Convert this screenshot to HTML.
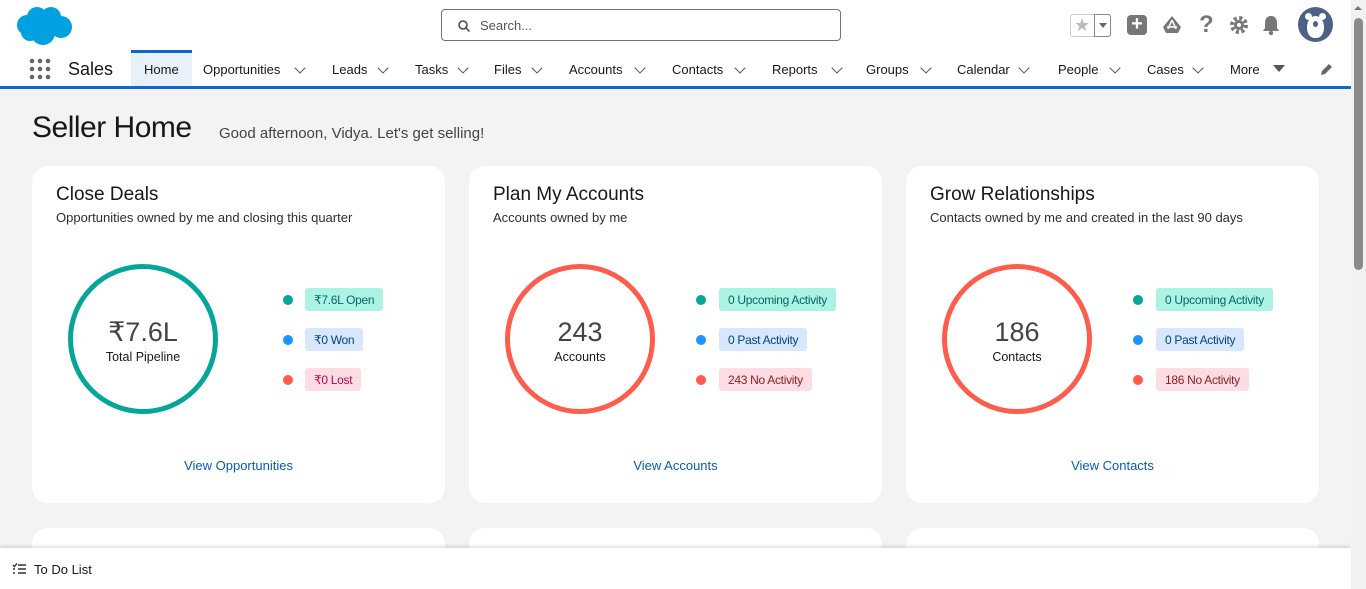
<!DOCTYPE html>
<html><head><meta charset="utf-8"><style>
*{box-sizing:border-box;margin:0;padding:0}
body{width:1366px;height:589px;overflow:hidden;background:#f3f3f3;font-family:"Liberation Sans",sans-serif;color:#181818;position:relative}
.top{position:absolute;left:0;top:0;width:1351px;height:50px;background:#fff}
.nav{position:absolute;left:0;top:50px;width:1351px;height:39px;background:#fff;border-bottom:3px solid #0b6bcb}
.search{position:absolute;left:441px;top:9px;width:400px;height:32px;border:1px solid #747474;border-radius:4px;font-size:13px;color:#555;padding:8px 0 0 38px}
.nav span{position:absolute;top:12px;font-size:13px;color:#181818}
.chev{position:absolute;top:14px;width:8px;height:8px;border-right:1.3px solid #555;border-bottom:1.3px solid #555;transform:rotate(45deg)}
.card{position:absolute;background:#fff;border-radius:16px;width:413px}
.card h2{position:absolute;left:24px;top:18px;font-size:19px;font-weight:normal}
.card p.s{position:absolute;left:24px;top:44px;font-size:13px;color:#2e2e2e}
.ring{position:absolute;left:36px;top:98px;width:150px;height:150px;border-radius:50%;border:5px solid;text-align:center}
.ring b{display:block;font-weight:300;font-size:27px;margin-top:48px;color:#444}
.ring i{font-style:normal;font-size:12.5px;display:block;margin-top:2px}
.dot{position:absolute;width:10px;height:10px;border-radius:50%}
.pill{position:absolute;height:23px;padding:5px 9px;font-size:12px;border-radius:3px;letter-spacing:-0.3px}
.link{position:absolute;width:100%;text-align:center;top:292px;font-size:13px;color:#0b5cab}
.bottom{position:absolute;left:0;top:548px;width:1351px;height:41px;background:#fff;box-shadow:0 -2px 3px rgba(0,0,0,.12)}
.sb{position:absolute;left:1351px;top:0;width:15px;height:589px;background:#f1f1f1}
.c1 .dot{left:251px}.c1 .pill{left:273px}
.c2 .dot{left:227px}.c2 .pill{left:250px}
</style></head><body>
<div class="top">
<svg style="position:absolute;left:15px;top:5px" width="60" height="40" viewBox="0 0 60 40"><g fill="#00a1e0"><circle cx="12" cy="20" r="10"/><circle cx="22" cy="12" r="10"/><circle cx="36" cy="12" r="10"/><circle cx="46" cy="22" r="11"/><circle cx="28" cy="28" r="12"/><circle cx="15" cy="27" r="9"/></g></svg>
<div class="search"><svg style="position:absolute;left:16px;top:10px" width="12" height="12" viewBox="0 0 12 12"><circle cx="5" cy="5" r="4" fill="none" stroke="#444" stroke-width="1.5"/><path d="M8 8l3.5 3.5" stroke="#444" stroke-width="1.5"/></svg>Search...</div>
<div style="position:absolute;left:1070px;top:14px;width:41px;height:23px;border:1px solid #ccc;border-radius:3px"><span style="position:absolute;left:3px;top:0;font-size:18px;color:#bbb">★</span><div style="position:absolute;left:23px;top:-1px;width:17px;height:23px;border:1px solid #888;border-radius:0 3px 3px 0"></div><div style="position:absolute;left:28px;top:8px;border:4px solid transparent;border-top:5px solid #666"></div></div>
<div style="position:absolute;left:1127px;top:15px;width:20px;height:20px;background:#777;border-radius:4px;color:#fff;font-size:20px;line-height:19px;text-align:center;font-weight:bold">+</div>
<svg style="position:absolute;left:1161px;top:15px" width="22" height="20" viewBox="0 0 22 20"><path d="M11 1L2 12 5 18H17L20 12Z" fill="#777"/><path d="M6 12h10M11 5l-4 9M11 5l4 9" stroke="#fff" stroke-width="1.5"/></svg>
<span style="position:absolute;left:1199px;top:11px;font-size:24px;color:#777;font-weight:bold">?</span>
<svg style="position:absolute;left:1229px;top:15px" width="20" height="20" viewBox="0 0 20 20"><circle cx="10" cy="10" r="7" fill="none" stroke="#777" stroke-width="4" stroke-dasharray="3 2.5"/><circle cx="10" cy="10" r="5" fill="#777"/><circle cx="10" cy="10" r="2" fill="#fff"/></svg>
<svg style="position:absolute;left:1261px;top:14px" width="20" height="22" viewBox="0 0 20 22"><path d="M10 2C6 2 4 5 4 9V14L2 17H18L16 14V9C16 5 14 2 10 2Z" fill="#777"/><circle cx="10" cy="19" r="2.2" fill="#777"/></svg>
<div style="position:absolute;left:1298px;top:7px;width:35px;height:35px;border-radius:50%;background:#4c6185;overflow:hidden"><div style="position:absolute;left:7px;top:6px;width:7px;height:7px;border-radius:50%;background:#fff"></div><div style="position:absolute;left:21px;top:6px;width:7px;height:7px;border-radius:50%;background:#fff"></div><div style="position:absolute;left:9px;top:9px;width:17px;height:22px;border-radius:50% 50% 45% 45%;background:#fff"></div><div style="position:absolute;left:15px;top:14px;width:5px;height:6px;border-radius:50%;background:#4c6185"></div></div>
</div>
<div class="nav">
<svg style="position:absolute;left:29px;top:8px" width="22" height="22"><g fill="#666"><circle cx="3" cy="3" r="2.3"/><circle cx="11" cy="3" r="2.3"/><circle cx="19" cy="3" r="2.3"/><circle cx="3" cy="11" r="2.3"/><circle cx="11" cy="11" r="2.3"/><circle cx="19" cy="11" r="2.3"/><circle cx="3" cy="19" r="2.3"/><circle cx="11" cy="19" r="2.3"/><circle cx="19" cy="19" r="2.3"/></g></svg>
<span style="left:68px;top:9px;font-size:18px">Sales</span>
<div style="position:absolute;left:131px;top:0;width:61px;height:36px;background:#e8f0fa;border-top:3px solid #0b6bcb"></div>
<span style="left:144px">Home</span>
<span style="left:203px">Opportunities</span><div class="chev" style="left:296px"></div>
<span style="left:332px">Leads</span><div class="chev" style="left:379px"></div>
<span style="left:415px">Tasks</span><div class="chev" style="left:459px"></div>
<span style="left:494px">Files</span><div class="chev" style="left:533px"></div>
<span style="left:569px">Accounts</span><div class="chev" style="left:636px"></div>
<span style="left:672px">Contacts</span><div class="chev" style="left:736px"></div>
<span style="left:772px">Reports</span><div class="chev" style="left:833px"></div>
<span style="left:866px">Groups</span><div class="chev" style="left:922px"></div>
<span style="left:957px">Calendar</span><div class="chev" style="left:1020px"></div>
<span style="left:1058px">People</span><div class="chev" style="left:1111px"></div>
<span style="left:1147px">Cases</span><div class="chev" style="left:1194px"></div>
<span style="left:1230px">More</span><div style="position:absolute;left:1273px;top:15px;border:6px solid transparent;border-top:7px solid #555;border-bottom:0"></div>
<svg style="position:absolute;left:1320px;top:12px" width="14" height="14" viewBox="0 0 14 14"><path d="M1 13l1-4 7-7 3 3-7 7z" fill="#666"/></svg>
</div>
<div style="position:absolute;left:32px;top:111px;font-size:30px;font-weight:300;color:#181818;letter-spacing:-0.5px">Seller Home</div>
<div style="position:absolute;left:219px;top:125px;font-size:15px;color:#444">Good afternoon, Vidya. Let's get selling!</div>

<div class="card c1" style="left:32px;top:166px;height:337px">
<h2>Close Deals</h2><p class="s">Opportunities owned by me and closing this quarter</p>
<div class="ring" style="border-color:#06a59a"><b>₹7.6L</b><i>Total Pipeline</i></div>
<div class="dot" style="top:129px;background:#06a59a"></div><div class="pill" style="top:122px;background:#acf3e4;color:#056764">₹7.6L Open</div>
<div class="dot" style="top:169px;background:#1b96ff"></div><div class="pill" style="top:162px;background:#d8e6fe;color:#014486">₹0 Won</div>
<div class="dot" style="top:209px;background:#fe5c4c"></div><div class="pill" style="top:202px;background:#fddde3;color:#b60554">₹0 Lost</div>
<div class="link">View Opportunities</div></div>

<div class="card c2" style="left:469px;top:166px;height:337px">
<h2>Plan My Accounts</h2><p class="s">Accounts owned by me</p>
<div class="ring" style="border-color:#fe5c4c"><b>243</b><i>Accounts</i></div>
<div class="dot" style="top:129px;background:#06a59a"></div><div class="pill" style="top:122px;background:#acf3e4;color:#056764">0 Upcoming Activity</div>
<div class="dot" style="top:169px;background:#1b96ff"></div><div class="pill" style="top:162px;background:#d8e6fe;color:#014486">0 Past Activity</div>
<div class="dot" style="top:209px;background:#fe5c4c"></div><div class="pill" style="top:202px;background:#fddde3;color:#8c1b1b">243 No Activity</div>
<div class="link">View Accounts</div></div>

<div class="card c2" style="left:906px;top:166px;height:337px">
<h2>Grow Relationships</h2><p class="s">Contacts owned by me and created in the last 90 days</p>
<div class="ring" style="border-color:#fe5c4c"><b>186</b><i>Contacts</i></div>
<div class="dot" style="top:129px;background:#06a59a"></div><div class="pill" style="top:122px;background:#acf3e4;color:#056764">0 Upcoming Activity</div>
<div class="dot" style="top:169px;background:#1b96ff"></div><div class="pill" style="top:162px;background:#d8e6fe;color:#014486">0 Past Activity</div>
<div class="dot" style="top:209px;background:#fe5c4c"></div><div class="pill" style="top:202px;background:#fddde3;color:#8c1b1b">186 No Activity</div>
<div class="link">View Contacts</div></div>

<div class="card" style="left:32px;top:528px;height:60px"></div>
<div class="card" style="left:469px;top:528px;height:60px"></div>
<div class="card" style="left:906px;top:528px;height:60px"></div>
<div class="bottom">
<svg style="position:absolute;left:12px;top:15px" width="14" height="12" viewBox="0 0 14 12"><path d="M1 2l1.5 1.5L5 0.5M6 2h8M6 6h8M6 10h8M1 6h2M1 10h2" stroke="#333" stroke-width="1.4" fill="none"/></svg>
<span style="position:absolute;left:34px;top:14px;font-size:13px">To Do List</span></div>
<div class="sb"><div style="position:absolute;left:3px;top:18px;width:9px;height:252px;border-radius:5px;background:#8a8a8a"></div><div style="position:absolute;left:3px;top:6px;border:4px solid transparent;border-bottom:4px solid #777;border-top:0"></div></div>
</body></html>
